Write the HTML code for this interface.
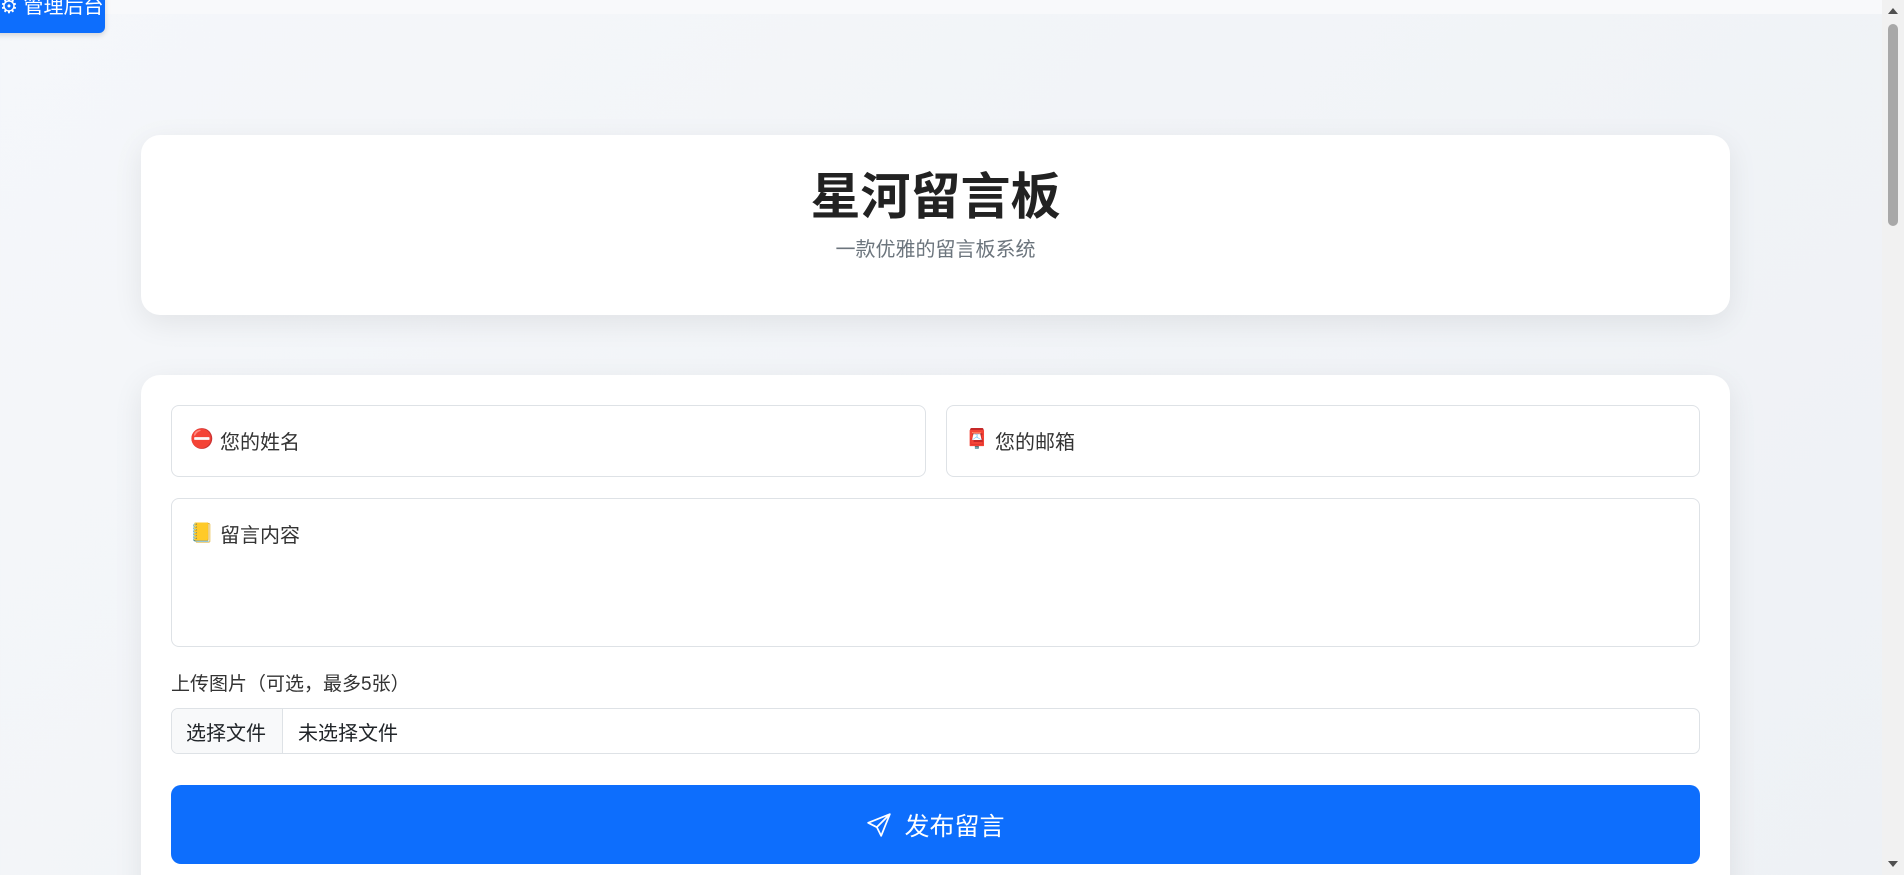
<!DOCTYPE html>
<html><head><meta charset="utf-8"><style>
*{box-sizing:border-box;margin:0;padding:0}
html,body{width:1904px;height:875px;overflow:hidden}
body{background:linear-gradient(135deg,#f5f7fa 0%,#eef1f5 100%);font-family:"Liberation Sans","Noto Sans CJK SC",sans-serif;color:#212529;position:relative}
.topstrip{position:absolute;left:0;top:0;width:1882px;height:14px;background:#f8f9fb}
.admin{position:absolute;left:-8px;top:-8px;width:113px;height:41px;background:#0d6efd;border-radius:6px;color:#fff;font-size:20px;padding:0 0 0 8px;line-height:30px;white-space:nowrap;overflow:hidden;box-shadow:0 2px 6px rgba(0,0,0,.15)}
.sb{position:absolute;right:0;top:0;width:22px;height:875px;background:#f1f1f1}
.sb .th{position:absolute;left:6px;top:24px;width:10px;height:202px;background:#a8a8a8;border-radius:5px}
.sb .up,.sb .dn{position:absolute;left:6px;width:0;height:0;border-left:5px solid transparent;border-right:5px solid transparent}
.sb .up{top:8px;border-bottom:6px solid #505050}
.sb .dn{bottom:8px;border-top:6px solid #505050}
.card{position:absolute;left:141px;width:1589px;background:#fff;border-radius:19px;box-shadow:0 8px 30px rgba(0,0,0,.08)}
.hdr{top:135px;height:180px;text-align:center}
.hdr h1{font-size:50px;font-weight:700;margin-top:30px;line-height:64px;color:#222}
.hdr p{font-size:20px;color:#6c757d;margin-top:4px}
.form{top:375px;height:560px}
.in{position:absolute;border:1px solid #dee2e6;border-radius:8px;background:#fff;font-size:20px;color:#333}
.in .ic{position:absolute;left:18px;font-size:19px}
.in .t{position:absolute;left:48px}
.lbl{position:absolute;left:30px;top:294px;font-size:19px;color:#333}
.file{position:absolute;left:30px;top:333px;width:1529px;height:46px;border:1px solid #dee2e6;border-radius:7px;font-size:20px;overflow:hidden}
.file .b{position:absolute;left:0;top:0;width:111px;height:44px;background:#f8f9fa;border-right:1px solid #dee2e6;padding:8px 0 0 14px}
.file .n{position:absolute;left:126px;top:8px}
.btn{position:absolute;left:30px;top:410px;width:1529px;height:79px;background:#0d6efd;border-radius:10px;color:#fff;font-size:25px;display:flex;align-items:center;justify-content:center;gap:12px}
</style></head><body>
<div class="topstrip"></div>
<div class="admin">⚙ 管理后台</div>
<div class="card hdr"><h1>星河留言板</h1><p>一款优雅的留言板系统</p></div>
<div class="card form">
 <div class="in" style="left:30px;top:30px;width:755px;height:72px"><span class="ic" style="top:21px;color:#e8365d">⛔</span><span class="t" style="top:20px">您的姓名</span></div>
 <div class="in" style="left:805px;top:30px;width:754px;height:72px"><span class="ic" style="top:21px">📮</span><span class="t" style="top:20px">您的邮箱</span></div>
 <div class="in" style="left:30px;top:123px;width:1529px;height:149px"><span class="ic" style="top:22px">📒</span><span class="t" style="top:20px">留言内容</span></div>
 <div class="lbl">上传图片（可选，最多5张）</div>
 <div class="file"><div class="b">选择文件</div><div class="n">未选择文件</div></div>
 <div class="btn"><svg width="26" height="26" viewBox="0 0 24 24" fill="none" stroke="#fff" stroke-width="1.6" stroke-linejoin="round"><path d="M22 2L2 10l8 4 4 8z M22 2L10 14"/></svg><span>发布留言</span></div>
</div>
<div class="sb"><div class="up"></div><div class="th"></div><div class="dn"></div></div>
</body></html>
